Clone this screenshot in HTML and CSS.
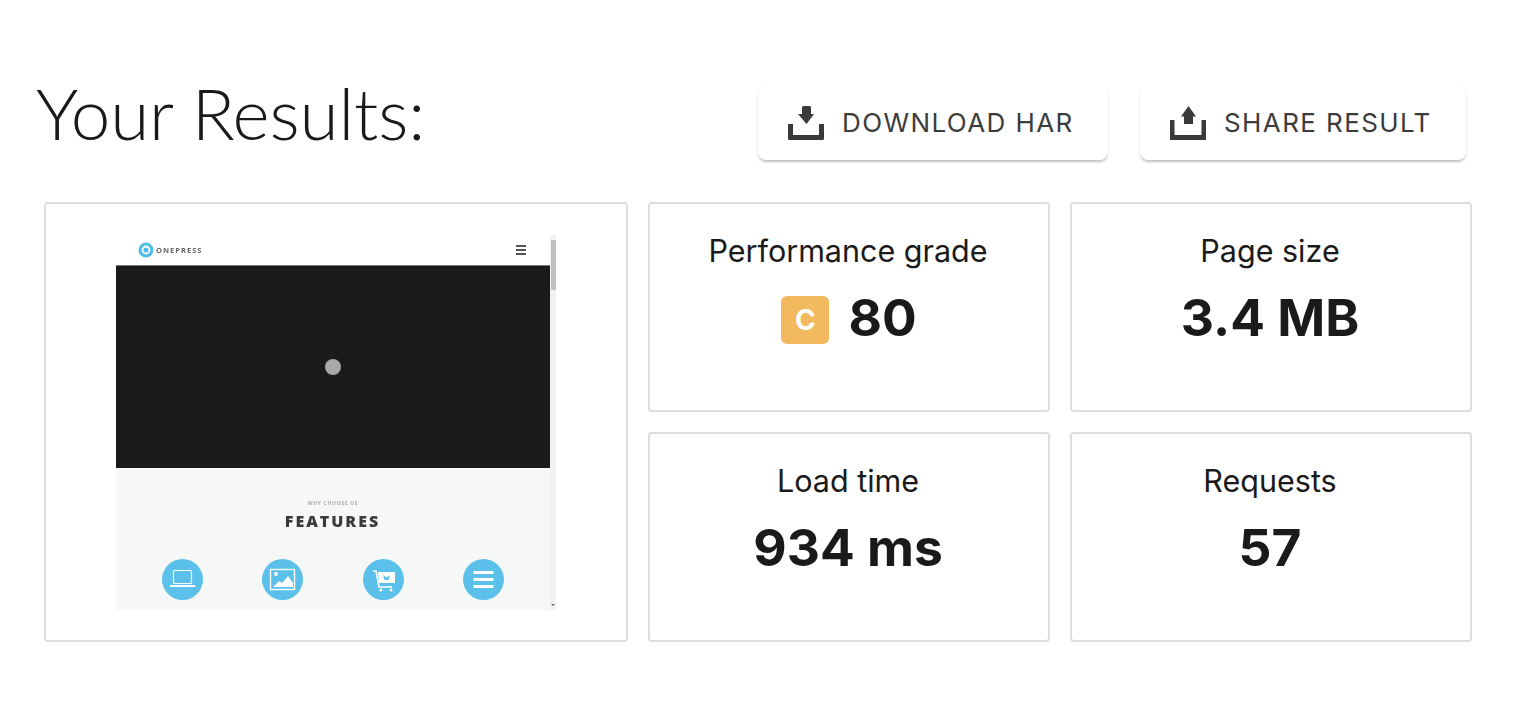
FILE: index.html
```html
<!DOCTYPE html>
<html lang="en">
<head>
<meta charset="utf-8">
<title>Your Results</title>
<link rel="stylesheet" href="styles.css">
</head>
<body>
<main class="page">
  <header class="head">
    <h1 class="title">Your Results:</h1>
    <div class="actions">
      <button class="btn btn-download">
        <svg class="btn-icon" viewBox="0 0 36 34"><path d="M0 18h5v11h26V18h5v14.500a1.500 1.500 0 0 1-1.500 1.500H1.500A1.500 1.500 0 0 1 0 32.500z"/><path d="M14 1.500A1.500 1.500 0 0 1 15.500 0h6A1.500 1.500 0 0 1 23 1.500V8h3l-7.500 10L10 8h4z"/></svg>
        <span>DOWNLOAD HAR</span>
      </button>
      <button class="btn btn-share">
        <svg class="btn-icon" viewBox="0 0 36 34"><path d="M0 14h4.500v15h27V14H36v20H0z"/><path d="M18.500 0L26 10.500h-3V18H14v-7.500h-3z"/></svg>
        <span>SHARE RESULT</span>
      </button>
    </div>
  </header>
  <section class="grid">
    <div class="card card-shot">
      <div class="shot">
        <div class="shot-page">
          <div class="shot-nav">
            <div class="logo">
              <svg class="logo-mark" viewBox="0 0 16 16"><circle cx="8" cy="8" r="7.500" fill="#4fbde6"/><circle cx="8" cy="8" r="3.500" fill="none" stroke="#fff" stroke-width="1.800"/></svg>
              <span class="logo-text">ONEPRESS</span>
            </div>
            <div class="burger"><i></i><i></i><i></i></div>
          </div>
          <div class="shot-hero"><span class="spinner"></span></div>
          <div class="shot-features">
            <div class="eyebrow">WHY CHOOSE US</div>
            <div class="features-title">FEATURES</div>
            <div class="feature-row">
              <span class="feature"><svg viewBox="0 0 41 41"><rect x="11.500" y="11.500" width="18" height="13" rx="1" fill="none" stroke="#fff" stroke-width="1.200"/><path d="M8 27h25" stroke="#fff" stroke-width="2"/></svg></span>
              <span class="feature"><svg viewBox="0 0 41 41"><rect x="8.500" y="10.500" width="24" height="20" fill="none" stroke="#fff" stroke-width="1.400"/><circle cx="14" cy="15" r="2" fill="#fff"/><path d="M11 28l6-6 3 2 6-7 5 7v4z" fill="#fff"/></svg></span>
              <span class="feature"><svg viewBox="0 0 41 41"><path d="M10 12h3l3 16h13" fill="none" stroke="#fff" stroke-width="1.500"/><path d="M15 13h17v11H16z" fill="#fff"/><path d="M20 16l3.500 2.500L27 16l-1.500 5h-4z" fill="#5bc1ea"/><circle cx="18" cy="31" r="1.500" fill="#fff"/><circle cx="28" cy="31" r="1.500" fill="#fff"/></svg></span>
              <span class="feature"><svg viewBox="0 0 41 41"><path d="M10.500 13.500h20M10.500 20.500h20M10.500 27.500h20" stroke="#fff" stroke-width="3"/></svg></span>
            </div>
          </div>
        </div>
        <div class="scrollbar"><span class="scroll-thumb"></span><span class="scroll-arrow"></span></div>
      </div>
    </div>
    <div class="card stat">
      <div class="stat-label">Performance grade</div>
      <div class="stat-value"><span class="grade">C</span>80</div>
    </div>
    <div class="card stat">
      <div class="stat-label">Page size</div>
      <div class="stat-value">3.4 MB</div>
    </div>
    <div class="card stat">
      <div class="stat-label">Load time</div>
      <div class="stat-value">934 ms</div>
    </div>
    <div class="card stat">
      <div class="stat-label">Requests</div>
      <div class="stat-value">57</div>
    </div>
  </section>
</main>
</body>
</html>
```

FILE: styles.css
```css
* { box-sizing: border-box; }
html, body { margin: 0; padding: 0; background: #fff; }
body { width: 1518px; height: 722px; overflow: hidden; font-family: Inter, "Liberation Sans", sans-serif; color: #1a1a1a; }
.page { padding: 72px 46px 0 36px; }

.head { display: flex; justify-content: space-between; align-items: flex-start; height: 130px; }
.title { margin: -1px 0 0; font-family: Lato, "Liberation Sans", sans-serif; font-weight: 300; font-size: 71px; line-height: 84px; letter-spacing: -.1px; color: #1a1a1a; }
.actions { display: flex; gap: 32px; padding: 14px 6px 0 0; }
.btn { display: flex; align-items: center; gap: 18px; height: 74px; padding: 0 30px; border: 0; border-radius: 8px; background: #fff; color: #3c3c3c; font: 400 26px Inter, "Liberation Sans", sans-serif; letter-spacing: 1.400px; white-space: nowrap; box-shadow: 0 3px 3px -1px rgba(0,0,0,.22), 0 1px 3px rgba(0,0,0,.08); }
.btn span { position: relative; top: -1px; }
.btn-download { width: 350px; }
.btn-share { width: 326px; }
.btn-icon { width: 36px; height: 34px; fill: #3a3a3a; flex: none; }

.grid { display: grid; grid-template-columns: 584px 402px 402px; grid-template-rows: 210px 210px; gap: 20px; margin-left: 8px; }
.card { border: 2px solid #ddd; border-radius: 4px; background: #fff; }
.card-shot { grid-row: span 2; display: flex; justify-content: center; padding-top: 31px; }

.shot { display: flex; width: 440px; height: 375px; }
.shot-page { width: 434px; display: flex; flex-direction: column; }
.shot-nav { height: 30px; display: flex; justify-content: space-between; align-items: center; padding: 0 24px 0 22px; }
.logo { display: flex; align-items: center; gap: 2px; }
.logo-mark { width: 16px; height: 16px; filter: blur(.3px); }
.logo-text { font: 700 7.500px "Open Sans", sans-serif; letter-spacing: 1px; color: #666; filter: blur(.3px); }
.burger { display: flex; flex-direction: column; gap: 2px; width: 10px; }
.burger i { display: block; height: 2px; background: #555; }
.shot-hero { height: 203px; background: #1a1a1a; border-top: 1px solid #777; display: flex; align-items: center; justify-content: center; }
.spinner { width: 16px; height: 16px; border-radius: 50%; background: #a8a8a8; }
.shot-features { flex: 1; background: #f6f7f7; padding-top: 31px; text-align: center; }
.eyebrow { font: 700 5px/8px "Open Sans", sans-serif; letter-spacing: .7px; color: #aaa; filter: blur(.3px); }
.features-title { font: 800 16px/22px "Open Sans", sans-serif; letter-spacing: 2px; color: #3a3a3a; margin-top: 3px; padding-right: 1px; filter: blur(.4px); }
.feature-row { display: flex; justify-content: space-between; padding: 0 46px 0 46px; margin-top: 27px; }
.feature { width: 41px; height: 41px; border-radius: 50%; background: #5bc1ea; display: block; }
.feature svg { display: block; width: 41px; height: 41px; filter: blur(.3px); }

.scrollbar { width: 6px; background: #f1f1f1; position: relative; }
.scroll-thumb { position: absolute; left: 1px; right: 0; top: 5px; height: 50px; background: #c1c1c1; }
.scroll-arrow { position: absolute; left: 1px; bottom: 2px; border: 2px solid transparent; border-top-color: #666; }

.stat { display: flex; flex-direction: column; align-items: center; padding: 28px 2px 0 0; text-align: center; }
.stat-label { font-size: 30.500px; line-height: 38px; color: #1a1a1a; }
.stat-value { display: flex; align-items: center; justify-content: center; font-size: 51.500px; line-height: 60px; font-weight: 700; margin-top: 17px; gap: 19px; }
.grade { width: 48px; height: 48px; margin: 3px 0 -3px 2px; border-radius: 6px; background: #f2b95f; color: #fff; font-size: 28px; font-weight: 700; line-height: 48px; display: block; }
```
